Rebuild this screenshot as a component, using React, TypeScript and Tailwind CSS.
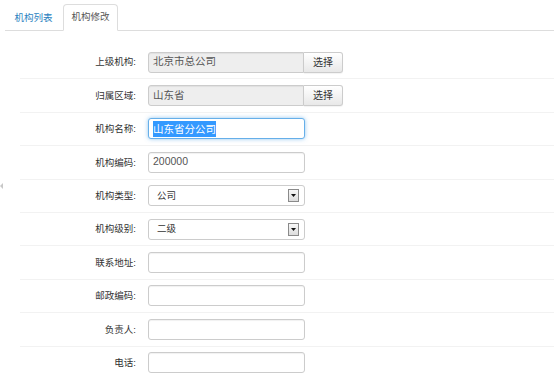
import React from "react";

const FONT = { fontFamily: '"Liberation Sans", "Noto Sans CJK SC", sans-serif' };

function Row({ label, children }: { label: string; children: React.ReactNode }) {
  return (
    <div className="h-[33.4px] border-b border-[#f2f2f2] flex items-center">
      <div className="w-[116px] text-right text-[9.5px] text-[#333] leading-none">{label}:</div>
      <div className="ml-[12px] flex items-center">{children}</div>
    </div>
  );
}

function TextInput({ value }: { value?: string }) {
  return (
    <div className="w-[157px] h-[21px] border border-[#ccc] rounded-[3px] bg-white shadow-[inset_0_1px_1px_rgba(0,0,0,0.06)] flex items-center pl-[4px] text-[10.5px] text-[#555]">
      {value}
    </div>
  );
}

function PickInput({ value }: { value: string }) {
  return (
    <div className="flex h-[21px]">
      <div className="w-[156px] h-full border border-[#ccc] rounded-l-[3px] bg-[#eeeeee] shadow-[inset_0_1px_1px_rgba(0,0,0,0.06)] flex items-center pl-[4px] text-[10.5px] text-[#555]">
        {value}
      </div>
      <div className="w-[39px] h-full border border-l-0 border-[#ccc] rounded-r-[3px] bg-gradient-to-b from-white to-[#e8e8e8] flex items-center justify-center text-[10px] text-[#333] shadow-[0_1px_1px_rgba(0,0,0,0.05)]">
        选择
      </div>
    </div>
  );
}

function SelectBox({ value }: { value: string }) {
  return (
    <div className="w-[157px] h-[21px] border border-[#ccc] rounded-[3px] bg-white flex items-center pl-[8px] pr-[5px] text-[9.5px] text-[#333]">
      <span className="flex-1">{value}</span>
      <div className="w-[11px] h-[13px] border border-[#8a8a8a] bg-gradient-to-b from-[#f8f8f8] to-[#dcdcdc] flex items-center justify-center">
        <svg width="5" height="3" viewBox="0 0 5 3">
          <path d="M0 0 L5 0 L2.5 3 Z" fill="#111" />
        </svg>
      </div>
    </div>
  );
}

export default function App() {
  return (
    <div className="w-[554px] h-[375px] bg-white overflow-hidden relative" style={FONT}>
      <div className="absolute left-0 top-[183px] w-0 h-0 border-y-[3.5px] border-y-transparent border-r-[3px] border-r-[#c8c8c8]" />
      <div className="ml-[5px] pt-[4px] flex border-b border-[#dddddd] h-[31px]">
        <div className="w-[57px] h-[26px] flex items-center justify-center text-[9.5px] text-[#2a7fc0] mt-[1px]">
          机构列表
        </div>
        <div className="ml-[1px] w-[55px] h-[27px] -mb-px border border-[#dddddd] border-b-white bg-white rounded-t-[4px] flex items-center justify-center text-[9.5px] text-[#555]">
          机构修改
        </div>
      </div>
      <div className="ml-[20px] mt-[15px]">
        <Row label="上级机构">
          <PickInput value="北京市总公司" />
        </Row>
        <Row label="归属区域">
          <PickInput value="山东省" />
        </Row>
        <Row label="机构名称">
          <div className="w-[157px] h-[21px] border border-[#66afe9] rounded-[3px] bg-white shadow-[0_0_4px_rgba(102,175,233,0.7)] flex items-center pl-[4px] text-[10.5px]">
            <span className="bg-[#3399ff] text-white leading-[16px]">山东省分公司</span>
          </div>
        </Row>
        <Row label="机构编码">
          <TextInput value="200000" />
        </Row>
        <Row label="机构类型">
          <SelectBox value="公司" />
        </Row>
        <Row label="机构级别">
          <SelectBox value="二级" />
        </Row>
        <Row label="联系地址">
          <TextInput />
        </Row>
        <Row label="邮政编码">
          <TextInput />
        </Row>
        <Row label="负责人">
          <TextInput />
        </Row>
        <Row label="电话">
          <TextInput />
        </Row>
      </div>
    </div>
  );
}
